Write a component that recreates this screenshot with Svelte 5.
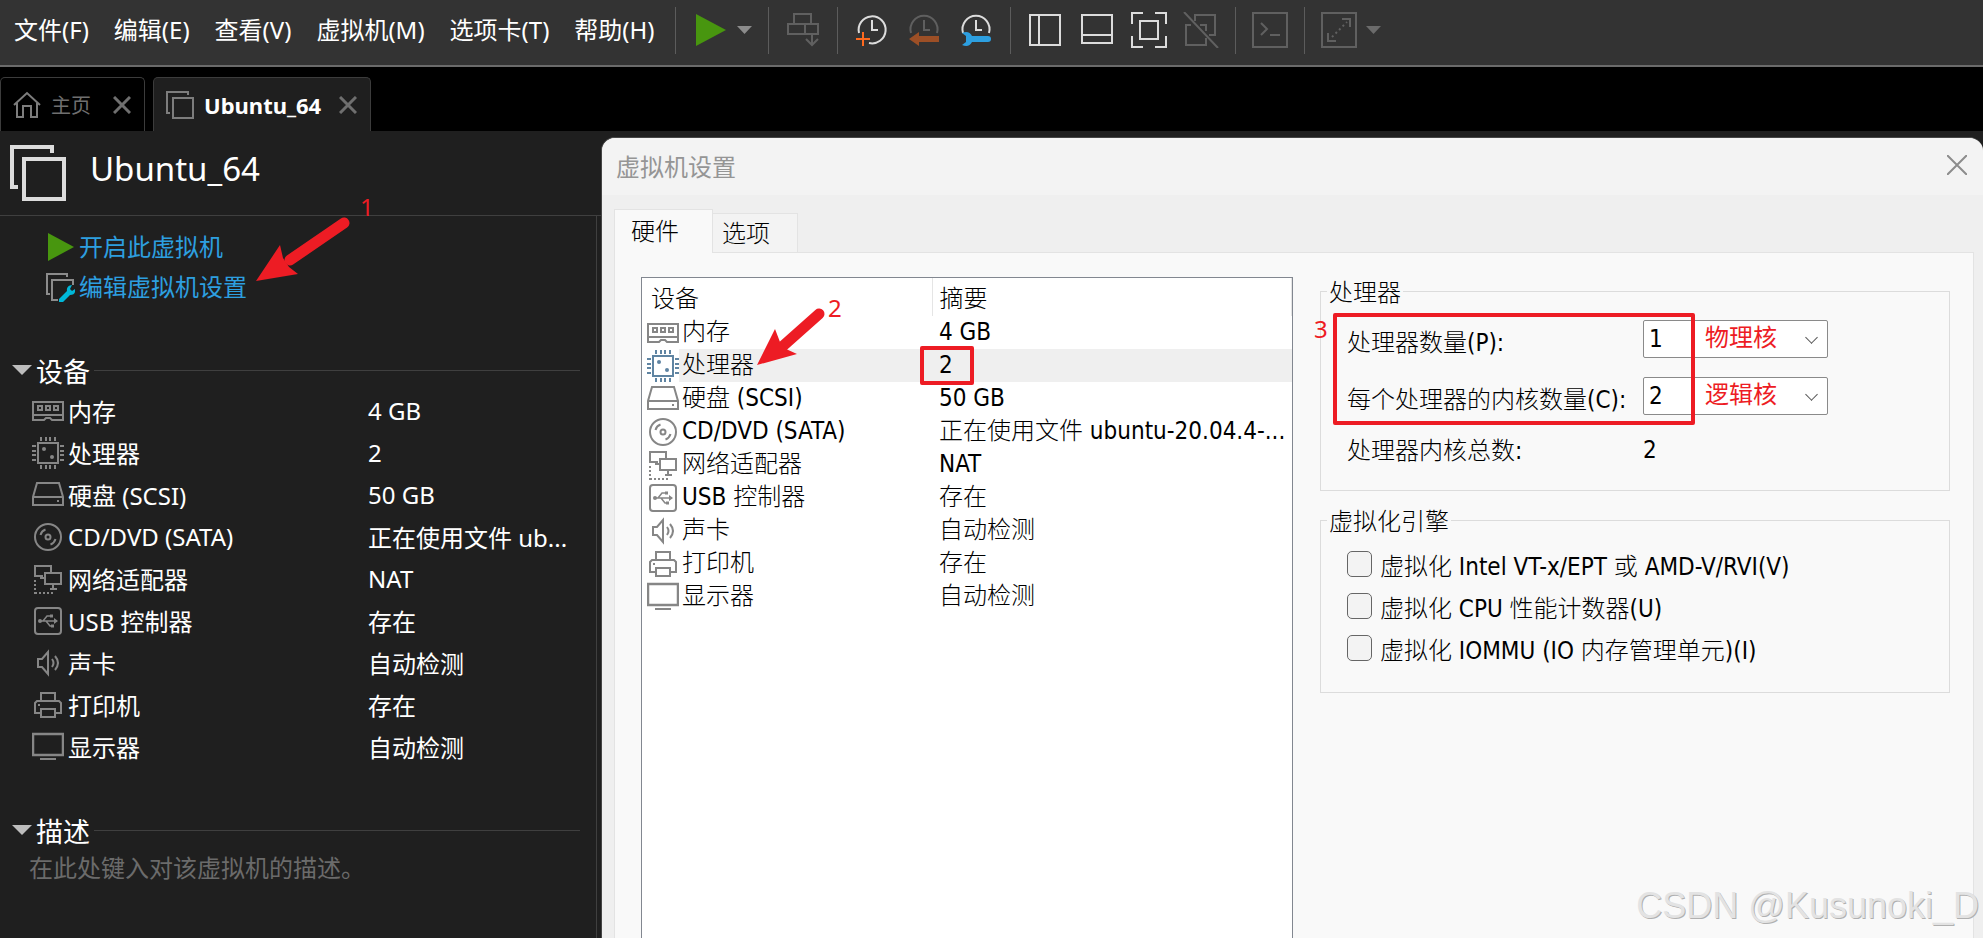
<script lang="ts">
  interface Device {
    icon: string;
    name: string;
    summary: string;
    detail?: string;
  }

  const menus = ['文件(F)', '编辑(E)', '查看(V)', '虚拟机(M)', '选项卡(T)', '帮助(H)'];

  const devices: Device[] = [
    { icon: 'memory', name: '内存', summary: '4 GB' },
    { icon: 'cpu', name: '处理器', summary: '2' },
    { icon: 'disk', name: '硬盘 (SCSI)', summary: '50 GB' },
    {
      icon: 'cd',
      name: 'CD/DVD (SATA)',
      summary: '正在使用文件 ub...',
      detail: '正在使用文件 ubuntu-20.04.4-...',
    },
    { icon: 'network', name: '网络适配器', summary: 'NAT' },
    { icon: 'usb', name: 'USB 控制器', summary: '存在' },
    { icon: 'sound', name: '声卡', summary: '自动检测' },
    { icon: 'printer', name: '打印机', summary: '存在' },
    { icon: 'display', name: '显示器', summary: '自动检测' },
  ];

  const engines = [
    '虚拟化 Intel VT-x/EPT 或 AMD-V/RVI(V)',
    '虚拟化 CPU 性能计数器(U)',
    '虚拟化 IOMMU (IO 内存管理单元)(I)',
  ];

  let selected = $state('cpu');
  let processors = $state(1);
  let cores = $state(2);
  let total = $derived(processors * cores);
</script>

{#snippet deviceIcon(name: string)}
  <svg class="device-icon" viewBox="0 0 32 32" fill="none" stroke="currentColor" stroke-width="2">
    {#if name === 'memory'}
      <path d="M1 7h30v18H20l-2-2h-4l-2 2H1zM1 20h30" />
      <path d="M6 11h4v4H6zM14 11h4v4h-4zM22 11h4v4h-4z" />
    {:else if name === 'cpu'}
      <rect x="6" y="6" width="20" height="20" />
      <path d="M9 0v4M14 0v4M18 0v4M23 0v4M9 28v4M14 28v4M18 28v4M23 28v4" />
      <path d="M0 9h4M0 14h4M0 18h4M0 23h4M28 9h4M28 14h4M28 18h4M28 23h4" />
      <circle cx="12" cy="12" r="2" fill="currentColor" stroke="none" />
      <circle cx="20" cy="20" r="2" fill="currentColor" stroke="none" />
    {:else if name === 'disk'}
      <path d="M5 4h22l4 14v8H1v-8zM1 18h30" />
      <path d="M25 22h2" />
    {:else if name === 'cd'}
      <circle cx="16" cy="16" r="13" />
      <circle cx="16" cy="16" r="2.5" />
      <path d="M8.500 14a8 8 0 0 1 5-5.500M23.500 18a8 8 0 0 1-5 5.500" />
    {:else if name === 'network'}
      <path d="M11 13H3V3h16v6M13 10h16v11H13zM21 21v4M18 26h7M8 15h4" />
      <path d="M3 17v14M3 30h18" stroke-dasharray="2 2" />
    {:else if name === 'usb'}
      <rect x="3" y="3" width="26" height="26" rx="3" />
      <path d="M7 16h18M11 16l4-5h4M14 16l4 5h3" stroke-width="1.500" />
      <path d="M22 13l4 3-4 3zM18 9.500h3v3h-3zM19 19.500h3v3h-3z" fill="currentColor" stroke="none" />
      <circle cx="8" cy="16" r="2" fill="currentColor" stroke="none" />
    {:else if name === 'sound'}
      <path d="M6 12h4l6-7v22l-6-7H6z" />
      <path d="M20 12q3 4 0 8M23 9q6 7 0 14" />
    {:else if name === 'printer'}
      <path d="M9 12V4h14v8M8 24H3V14l2-2h22l2 2v10h-5" />
      <path d="M9 20h14v8H9zM6 16h2" />
    {:else}
      <path d="M1 3h30v21H1z" stroke-width="2.500" />
      <path d="M8 28h16" />
    {/if}
  </svg>
{/snippet}

<div class="app">
  <header class="toolbar">
    <nav class="menus">
      {#each menus as menu}
        <button class="menu">{menu}</button>
      {/each}
    </nav>
    <div class="tools tools--power">
      <button class="tool" aria-label="开启">
        <svg viewBox="0 0 36 36"><path d="M4 2l30 16L4 34z" fill="#48960f" /></svg>
      </button>
      <button class="tool-arrow" aria-label="电源选项">
        <svg viewBox="0 0 15 8"><path d="M0 0h15L7.500 8z" fill="#8c8c8c" /></svg>
      </button>
    </div>
    <div class="tools tools--off">
      <button class="tool" aria-label="发送">
        <svg viewBox="0 0 36 36">
          <path d="M9 12V2h17v10M3 12h30v10H3zM20 12v10M27 23v10M21 27l6 6 6-6" />
        </svg>
      </button>
    </div>
    <div class="tools">
      <button class="tool" aria-label="拍摄快照">
        <svg viewBox="0 0 36 36">
          <path d="M5 21a13.500 13.500 0 1 1 10 10M18 8v10h6" />
          <path d="M9 20v14M2 27h14" stroke="#ff6a1f" />
        </svg>
      </button>
      <button class="tool" aria-label="恢复快照">
        <svg viewBox="0 0 36 36">
          <path d="M5 21a13.500 13.500 0 1 1 26 0M18 8v10h6" stroke="#5f5f5f" />
          <path d="M3 27l10-7v4h20v6H13v4z" fill="#9c4f26" stroke="none" />
        </svg>
      </button>
      <button class="tool" aria-label="管理快照">
        <svg viewBox="0 0 36 36">
          <path d="M5 21a13.500 13.500 0 1 1 26 0M18 8v10h6" />
          <path
            d="M4 21q7-3 10 3h16a3 3 0 0 1 0 6H14q-3 6-10 3l4-3v-6z"
            fill="#2d9fe0"
            stroke="none"
          />
        </svg>
      </button>
    </div>
    <div class="tools">
      <button class="tool" aria-label="库">
        <svg viewBox="0 0 36 36"><path d="M3 3h30v30H3zM12 3v30" /></svg>
      </button>
      <button class="tool" aria-label="缩略图栏">
        <svg viewBox="0 0 36 36"><path d="M3 3h30v28H3zM3 23h30" /></svg>
      </button>
      <button class="tool" aria-label="全屏">
        <svg viewBox="0 0 36 36">
          <path d="M1 12V1h11M24 1h11v11M35 24v11H24M12 35H1V24M9 9h18v18H9z" />
        </svg>
      </button>
      <button class="tool tool--off" aria-label="Unity">
        <svg viewBox="0 0 36 36">
          <path d="M12 9V3h20v20h-6M8 13H3v20h20v-7M17 13h6v6M1 0l34 36" />
        </svg>
      </button>
    </div>
    <div class="tools tools--off">
      <button class="tool" aria-label="控制台">
        <svg viewBox="0 0 36 36"><path d="M1 1h34v34H1zM9 11l6 6-6 6M18 23h10" /></svg>
      </button>
    </div>
    <div class="tools tools--off tools--stretch">
      <button class="tool" aria-label="拉伸">
        <svg viewBox="0 0 36 36">
          <path d="M1 1h34v34H1zM21 7h8v8M7 21v8h8" />
          <path d="M11 25L26 10" stroke-dasharray="2 3" />
        </svg>
      </button>
      <button class="tool-arrow" aria-label="拉伸选项">
        <svg viewBox="0 0 15 8"><path d="M0 0h15L7.500 8z" fill="#6b6b6b" stroke="none" /></svg>
      </button>
    </div>
  </header>

  <div class="tabs">
    <div class="tab">
      <svg class="tab__icon" viewBox="0 0 28 28">
        <path d="M1 14L14 2l13 12M4 12v14h6V15h8v11h6V12" />
      </svg>
      <button class="tab__name">主页</button>
      <button class="tab__close" aria-label="关闭主页">
        <svg viewBox="0 0 18 18"><path d="M1 1l16 16M17 1L1 17" /></svg>
      </button>
    </div>
    <div class="tab tab--active">
      <svg class="tab__icon" viewBox="0 0 28 28">
        <path d="M4 22H1V1h21v3M7 7h20v20H7z" />
      </svg>
      <button class="tab__name">Ubuntu_64</button>
      <button class="tab__close" aria-label="关闭 Ubuntu_64">
        <svg viewBox="0 0 18 18"><path d="M1 1l16 16M17 1L1 17" /></svg>
      </button>
    </div>
  </div>

  <main class="workspace">
    <div class="vm-header">
      <svg class="vm-header__icon" viewBox="0 0 56 56">
        <path d="M8 42H2V2h40v6M14 14h40v40H14z" />
      </svg>
      <h1>Ubuntu_64</h1>
    </div>

    <aside class="sidebar">
      <div class="actions">
        <ul class="commands">
          <li>
            <svg viewBox="0 0 30 30"><path d="M3 1l26 14L3 29z" fill="#48960f" /></svg>
            <a href="#power">开启此虚拟机</a>
          </li>
          <li>
            <svg viewBox="0 0 30 30" fill="none" stroke="#8c8c8c" stroke-width="2">
              <path d="M5 22H2V2h20v3M13 28H7V8h21v5" />
              <path
                d="M14 27l8-8q-1-5 5-6l-2 4 2 2 3-2q1 6-5 6l-7 7h-4z"
                fill="#00b7d8"
                stroke="none"
              />
            </svg>
            <a href="#settings">编辑虚拟机设置</a>
          </li>
        </ul>
        <svg class="arrow arrow--settings" viewBox="0 0 100 70">
          <path d="M88 9L34 46" stroke="#ed1c24" stroke-width="11" stroke-linecap="round" />
          <path d="M0 67l24-36 3 13 6 9 9 7z" fill="#ed1c24" />
        </svg>
        <span class="mark mark--one">1</span>
      </div>

      <h2>设备</h2>
      <table class="summary">
        <colgroup>
          <col class="summary__icon" />
          <col class="summary__name" />
          <col />
        </colgroup>
        <tbody>
          {#each devices as device}
            <tr>
              <td>{@render deviceIcon(device.icon)}</td>
              <td>{device.name}</td>
              <td>{device.summary}</td>
            </tr>
          {/each}
        </tbody>
      </table>

      <h2>描述</h2>
      <textarea class="description" rows="1" aria-label="描述" placeholder="在此处键入对该虚拟机的描述。"
      ></textarea>
    </aside>

    <div class="dialog" role="dialog" aria-labelledby="dialog-title" tabindex="-1">
      <header class="dialog__title">
        <span id="dialog-title">虚拟机设置</span>
        <button aria-label="关闭">
          <svg viewBox="0 0 20 20">
            <path d="M0 0l20 20M20 0L0 20" stroke="#8c8c8c" stroke-width="2" />
          </svg>
        </button>
      </header>
      <div class="dialog__body">
        <div class="pages" role="tablist">
          <button class="page page--active" role="tab" aria-selected="true">硬件</button>
          <button class="page" role="tab" aria-selected="false">选项</button>
        </div>
        <div class="panel">
          <div class="hardware">
            <table>
              <colgroup>
                <col class="hardware__icons" />
                <col class="hardware__names" />
                <col />
              </colgroup>
              <thead>
                <tr>
                  <th class="hardware__device" colspan="2">设备</th>
                  <th>摘要</th>
                </tr>
              </thead>
              <tbody>
                {#each devices as device}
                  <tr
                    class:selected={selected === device.icon}
                    onclick={() => (selected = device.icon)}
                  >
                    <td class="hardware__icon">{@render deviceIcon(device.icon)}</td>
                    <td class="hardware__name">{device.name}</td>
                    <td class="hardware__summary">{device.detail ?? device.summary}</td>
                  </tr>
                {/each}
              </tbody>
            </table>
            <svg class="arrow arrow--cpu" viewBox="0 0 76 60">
              <path d="M62 8L26 40" stroke="#ed1c24" stroke-width="11" stroke-linecap="round" />
              <path d="M0 59l18-36 5 13 6 7 11 5z" fill="#ed1c24" />
            </svg>
            <span class="mark mark--two">2</span>
            <span class="frame frame--count"></span>
          </div>

          <div class="settings">
            <fieldset class="processors">
              <legend>处理器</legend>
              <label for="processors">处理器数量(P):</label>
              <div class="choice">
                <select id="processors" bind:value={processors}>
                  {#each [1, 2, 4, 8] as count}
                    <option value={count}>{count}</option>
                  {/each}
                </select>
                <span class="mark choice__note">物理核</span>
              </div>
              <label for="cores">每个处理器的内核数量(C):</label>
              <div class="choice">
                <select id="cores" bind:value={cores}>
                  {#each [1, 2, 4, 8] as count}
                    <option value={count}>{count}</option>
                  {/each}
                </select>
                <span class="mark choice__note">逻辑核</span>
              </div>
              <span class="total">处理器内核总数:</span>
              <output for="processors cores">{total}</output>
              <span class="frame frame--fields"></span>
              <span class="mark mark--three">3</span>
            </fieldset>

            <fieldset class="engines">
              <legend>虚拟化引擎</legend>
              {#each engines as engine}
                <label class="check">
                  <input type="checkbox" />
                  {engine}
                </label>
              {/each}
            </fieldset>
          </div>
        </div>
      </div>
    </div>
    <span class="watermark">CSDN @Kusunoki_D</span>
  </main>
</div>

<style>
  :global(body) {
    background: #1f1f1f;
  }
  .app {
    display: flex;
    flex-direction: column;
    height: 100vh;
    overflow: hidden;
    color: #fff;
    background: #1f1f1f;
    font-family: 'Noto Sans', 'Noto Sans CJK SC', sans-serif;
    font-size: 24px;
  }
  * {
    box-sizing: border-box;
  }
  button {
    padding: 0;
    border: 0;
    background: none;
    color: inherit;
    font: inherit;
    white-space: nowrap;
  }
  svg {
    display: block;
    flex: none;
  }
  table {
    width: 100%;
    border-collapse: collapse;
    table-layout: fixed;
  }
  td,
  th {
    padding: 0;
    font-weight: inherit;
    text-align: left;
    white-space: nowrap;
  }

  .toolbar {
    display: flex;
    align-items: center;
    flex: none;
    height: 67px;
    padding-bottom: 5px;
    background: #333;
    border-bottom: 2px solid #6b6b6b;
  }
  .menus {
    display: flex;
    flex: none;
    gap: 25px;
    width: 675px;
    padding: 0 0 4px 14px;
  }
  .tools {
    display: flex;
    align-items: center;
    gap: 16px;
    height: 47px;
    padding: 0 16px;
    border-left: 1px solid #5c5c5c;
    fill: none;
    stroke: #dcdcdc;
    stroke-width: 2;
  }
  .tools--power {
    gap: 9px;
    stroke: none;
  }
  .tools--stretch {
    gap: 9px;
  }
  .tools--off,
  .tool--off {
    stroke: #606060;
  }
  .tool svg {
    width: 36px;
    height: 36px;
  }
  .tool-arrow svg {
    width: 15px;
    height: 8px;
  }

  .tabs {
    display: flex;
    flex: none;
    gap: 8px;
    height: 64px;
    padding-top: 10px;
    background: #000;
  }
  .tab {
    display: flex;
    align-items: center;
    padding: 0 13px 0 12px;
    border: 1px solid #3c3c3c;
    border-bottom: 0;
    border-radius: 5px 5px 0 0;
    color: #6f6f6f;
    font-size: 20px;
  }
  .tab--active {
    background: #1f1f1f;
    color: #fff;
    font-size: 22px;
    font-weight: 700;
  }
  .tab__icon {
    width: 28px;
    height: 28px;
    fill: none;
    stroke: #7d7d7d;
    stroke-width: 2;
  }
  .tab__name {
    margin: 0 22px 0 10px;
  }
  .tab--active .tab__name {
    margin-right: 18px;
  }
  .tab__close svg {
    width: 18px;
    height: 18px;
    stroke: #6f6f6f;
    stroke-width: 3;
  }

  .workspace {
    position: relative;
    flex: 1;
    min-height: 0;
  }
  .vm-header {
    display: flex;
    align-items: center;
    gap: 24px;
    height: 85px;
    padding: 0 10px;
    border-bottom: 1px solid #3f3f3f;
  }
  .vm-header__icon {
    width: 56px;
    height: 56px;
    fill: none;
    stroke: #dcdcdc;
    stroke-width: 4;
  }
  h1 {
    margin: 0 0 10px;
    font-size: 33px;
    font-weight: 400;
  }

  .sidebar {
    width: 597px;
    height: 100%;
    padding-top: 11px;
    border-right: 1px solid #3f3f3f;
  }
  .actions {
    position: relative;
    margin-bottom: 45px;
  }
  .commands {
    margin: 0;
    padding: 0;
    list-style: none;
  }
  .commands li {
    display: flex;
    align-items: center;
    gap: 4px;
    height: 40px;
    padding-left: 45px;
  }
  .commands li svg {
    width: 30px;
    height: 30px;
  }
  .commands a {
    padding-bottom: 4px;
    color: #2d9fe0;
    text-decoration: none;
  }
  h2 {
    display: flex;
    align-items: center;
    gap: 4px;
    height: 36px;
    margin: 0 0 2px;
    padding: 0 16px 0 12px;
    font-size: 27px;
    font-weight: 400;
  }
  h2::before {
    content: '';
    border: 10px solid transparent;
    border-top-color: #bdbdbd;
    border-bottom: 0;
  }
  h2::after {
    content: '';
    flex: 1;
    height: 1px;
    background: #3f3f3f;
  }
  .device-icon {
    width: 32px;
    height: 32px;
    color: #868686;
  }
  .summary {
    margin-bottom: 44px;
  }
  .summary tr {
    height: 42px;
  }
  .summary td {
    padding-bottom: 2px;
  }
  .summary td:first-child {
    padding: 0 0 0 32px;
  }
  .summary__icon {
    width: 68px;
  }
  .summary__name {
    width: 300px;
  }
  .description {
    display: block;
    width: 100%;
    height: 40px;
    padding: 0 29px;
    border: 0;
    background: none;
    color: #fff;
    font: inherit;
    line-height: 36px;
    resize: none;
    overflow: hidden;
  }
  .description::placeholder {
    color: #6b6b6b;
  }

  .dialog {
    position: absolute;
    inset: 6px 0 0 601px;
    display: flex;
    flex-direction: column;
    border: 1px solid #454545;
    border-width: 1px 0 0 1px;
    border-radius: 14px 14px 0 0;
    background: #efefef;
    color: #000;
    font-family: 'DejaVu Sans Condensed', 'Noto Sans', 'Noto Sans CJK SC', sans-serif;
    font-weight: 300;
    overflow: hidden;
  }
  .dialog__title {
    display: flex;
    align-items: center;
    justify-content: space-between;
    flex: none;
    height: 57px;
    padding: 0 16px 3px 14px;
    background: #f3f3f3;
    color: #959595;
    font-weight: 400;
  }
  .dialog__title svg {
    width: 20px;
    height: 20px;
  }
  .dialog__body {
    display: flex;
    flex-direction: column;
    flex: 1;
    min-height: 0;
    padding: 14px 9px 0 12px;
  }
  .pages {
    position: relative;
    z-index: 1;
    display: flex;
    align-items: flex-end;
    height: 44px;
    margin-bottom: -1px;
  }
  .page {
    height: 40px;
    padding: 0 27px 0 9px;
    border: 1px solid #e3e3e3;
    border-left: 0;
    background: #f3f3f3;
    line-height: 40px;
  }
  .page--active {
    height: 44px;
    padding: 0 33px 0 16px;
    border-left: 1px solid #e3e3e3;
    border-bottom: 0;
    background: #f9f9f9;
  }
  .panel {
    display: flex;
    align-items: stretch;
    gap: 27px;
    flex: 1;
    min-height: 0;
    padding: 24px 23px 0 26px;
    border: 1px solid #e3e3e3;
    border-bottom: 0;
    background: #f9f9f9;
  }

  .hardware {
    position: relative;
    flex: none;
    width: 652px;
    border: 1px solid #828790;
    border-bottom: 0;
    background: #fff;
  }
  .hardware__icons {
    width: 37px;
  }
  .hardware__names {
    width: 253px;
  }
  .hardware thead tr {
    height: 38px;
  }
  .hardware th {
    padding: 0 0 2px 7px;
    border-right: 1px solid #e5e5e5;
  }
  .hardware .hardware__device {
    padding-left: 9px;
  }
  .hardware tbody tr {
    height: 33px;
    line-height: 33px;
  }
  .hardware__icon {
    padding-left: 5px;
  }
  .hardware__name {
    padding-left: 3px;
  }
  .hardware__summary {
    padding-left: 7px;
  }
  .selected .device-icon {
    color: #5f84a2;
  }
  .selected .hardware__name,
  .selected .hardware__summary {
    background: #efefef;
  }

  .settings {
    display: flex;
    flex-direction: column;
    gap: 15px;
    flex: 1;
  }
  fieldset {
    min-width: 0;
    margin: 0;
    border: 1px solid #dcdcdc;
  }
  legend {
    height: 28px;
    margin-left: -20px;
    padding: 0 2px;
    line-height: 32px;
  }
  .processors {
    position: relative;
    display: grid;
    grid-template-columns: 296px 185px;
    grid-template-rows: 38px 38px 32px;
    align-items: center;
    row-gap: 19px;
    padding: 15px 0 24px 26px;
    white-space: nowrap;
  }
  .processors label {
    padding-top: 2px;
  }
  .total {
    padding-bottom: 4px;
  }
  .choice {
    position: relative;
  }
  .choice::after {
    content: '';
    position: absolute;
    top: 13px;
    right: 12px;
    width: 8px;
    height: 8px;
    border: solid #555;
    border-width: 0 1px 1px 0;
    transform: rotate(45deg);
    pointer-events: none;
  }
  select {
    display: block;
    width: 100%;
    height: 38px;
    padding: 0 5px;
    appearance: none;
    border: 1px solid #8a8a8a;
    border-radius: 2px;
    background: #fff;
    color: #000;
    font: inherit;
  }
  .engines {
    padding: 9px 0 23px 26px;
  }
  .check {
    display: flex;
    align-items: center;
    gap: 8px;
    height: 42px;
    white-space: nowrap;
  }
  .check input {
    flex: none;
    width: 25px;
    height: 26px;
    margin: 0;
    appearance: none;
    border: 1px solid #666;
    border-radius: 5px;
    background: #f3f3f3;
  }

  /* red tutorial marks drawn over the windows */
  .arrow {
    position: absolute;
    pointer-events: none;
  }
  .mark {
    position: absolute;
    color: #ed1c24;
    font-family: 'Noto Sans', 'Noto Sans CJK SC', sans-serif;
    font-weight: 400;
    line-height: 32px;
    pointer-events: none;
  }
  .frame {
    position: absolute;
    border: 4px solid #ed1c24;
    border-radius: 2px;
    pointer-events: none;
  }
  .arrow--settings {
    left: 256px;
    top: -13px;
    width: 100px;
    height: 70px;
  }
  .mark--one {
    left: 360px;
    top: -36px;
  }
  .arrow--cpu {
    left: 115px;
    top: 28px;
    width: 76px;
    height: 60px;
  }
  .mark--two {
    left: 186px;
    top: 14px;
  }
  .frame--count {
    left: 278px;
    top: 68px;
    width: 54px;
    height: 39px;
  }
  .choice__note {
    left: 62px;
    top: 1px;
  }
  .frame--fields {
    left: 12px;
    top: 8px;
    width: 362px;
    height: 112px;
  }
  .mark--three {
    left: -7px;
    top: 8px;
  }
  .watermark {
    position: absolute;
    right: 4px;
    bottom: 12px;
    color: #e3e3e3;
    font-family: 'Liberation Sans', sans-serif;
    font-size: 36px;
    line-height: 40px;
    text-shadow: 1px 1px 0 #b0b0b0;
  }
</style>
